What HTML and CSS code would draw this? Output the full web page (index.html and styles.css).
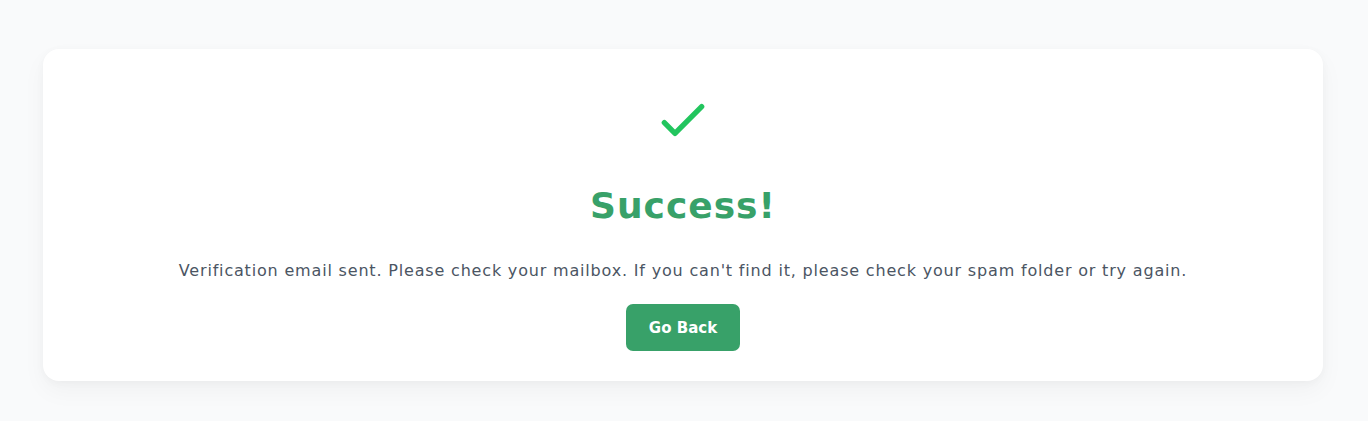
FILE: index.html
```html
<!DOCTYPE html>
<html lang="en">
<head>
<meta charset="utf-8">
<title>Success</title>
<link rel="stylesheet" href="styles.css">
</head>
<body>
<main class="page">
  <section class="card">
    <svg class="icon" viewBox="0 0 24 24" width="64" height="64" fill="none" stroke="currentColor" stroke-width="2" stroke-linecap="round" stroke-linejoin="round" aria-hidden="true">
      <path d="M5 13l4 4L19 7"/>
    </svg>
    <h1 class="title">Success!</h1>
    <p class="message">Verification email sent. Please check your mailbox. If you can't find it, please check your spam folder or try again.</p>
    <button class="btn" type="button">Go Back</button>
  </section>
</main>
</body>
</html>
```
FILE: styles.css
```css
* { box-sizing: border-box; }
html, body { margin: 0; padding: 0; }
body {
  background: #f9fafb;
  font-family: "DejaVu Sans", "Open Sans", sans-serif;
  color: #4b5563;
}
.page {
  padding: 49px 45px 41px 43px;
}
.card {
  background: #ffffff;
  border-radius: 16px;
  box-shadow: 0 10px 25px rgba(0, 0, 0, 0.04), 0 2px 8px rgba(0, 0, 0, 0.03);
  padding: 39px 40px 30px;
  display: flex;
  flex-direction: column;
  align-items: center;
  text-align: center;
}
.icon {
  color: #22c55e;
  display: block;
}
.title {
  margin: 34px 0 0;
  font-size: 36px;
  line-height: 40px;
  font-weight: 700;
  letter-spacing: 1px;
  color: #38a169;
}
.message {
  margin: 33px 0 0;
  font-size: 16px;
  line-height: 24px;
  letter-spacing: 0.82px;
}
.btn {
  margin-top: 21px;
  font-family: inherit;
  font-size: 15px;
  font-weight: 600;
  color: #ffffff;
  background: #38a169;
  border: none;
  border-radius: 7px;
  width: 114px;
  height: 47px;
  cursor: pointer;
}
```
